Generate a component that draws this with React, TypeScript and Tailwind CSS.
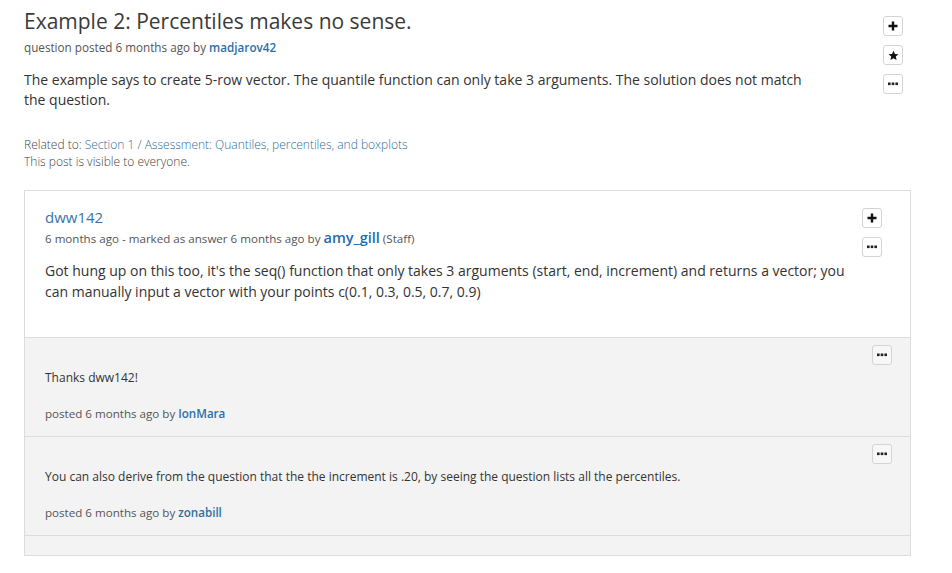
const PlusIcon = () => (
  <svg width="10" height="10" viewBox="0 0 10 10">
    <path d="M5 0.5v9M0.5 5h9" stroke="#111" strokeWidth="2.4" />
  </svg>
);

const StarIcon = () => (
  <svg width="11" height="11" viewBox="0 0 24 24">
    <path d="M12 1.5l3.2 7.1 7.6.7-5.8 5.1 1.7 7.6L12 18l-6.7 4 1.7-7.6L1.2 9.3l7.6-.7z" fill="#111" />
  </svg>
);

const DotsIcon = () => (
  <svg width="10" height="4" viewBox="0 0 10 4">
    <rect x="0" y="0.5" width="2.6" height="2.6" fill="#222" />
    <rect x="3.7" y="0.5" width="2.6" height="2.6" fill="#222" />
    <rect x="7.4" y="0.5" width="2.6" height="2.6" fill="#222" />
  </svg>
);

const IconButton = ({ children, gray }: { children: React.ReactNode; gray?: boolean }) => (
  <button
    className={
      gray
        ? "w-[20px] h-[20px] flex items-center justify-center border border-[#d4d4d4] rounded-[3px] bg-[#f7f7f7]"
        : "w-[20px] h-[20px] flex items-center justify-center border border-[#d4d4d4] rounded-[3px] bg-white"
    }
  >
    {children}
  </button>
);

const Comment = ({ text, author }: { text: string; author: string }) => (
  <div className="border-t border-[#dcdcdc] bg-[#f3f3f3] pl-[20px] pr-[18px] pt-[7px] pb-[14px]">
    <div className="flex justify-end">
      <IconButton gray>
        <DotsIcon />
      </IconButton>
    </div>
    <p className="mt-[4px] text-[12px] leading-[17px] text-[#333]">{text}</p>
    <p className="mt-[19px] text-[11.6px] leading-[17px] text-[#555]">
      posted 6 months ago by <span className="font-semibold text-[#2f6ea6]">{author}</span>
    </p>
  </div>
);

export default function App() {
  return (
    <div
      className="w-[952px] h-[573px] bg-white pl-6 pr-[41px] pt-[7px] overflow-hidden"
      style={{ fontFamily: '"Open Sans", "Noto Sans", sans-serif' }}
    >
      <div className="flex">
        <div className="flex-1">
          <h1 className="text-[21px] leading-[28px] text-[#3a3a3a] font-normal">
            Example 2: Percentiles makes no sense.
          </h1>
          <p className="mt-1 text-[11.7px] leading-[16px] text-[#555]">
            question posted 6 months ago by <span className="font-semibold text-[#2f6ea6]">madjarov42</span>
          </p>
          <p className="mt-[15px] w-[800px] text-[14px] leading-[20px] text-[#333]">
            The example says to create 5-row vector. The quantile function can only take 3 arguments. The solution does not match
            the question.
          </p>
          <div className="mt-[26px] text-[12px] leading-[17px] text-[#444] font-light">
            <p>
              Related to: <span className="text-[#2a6f9e]">Section 1 / Assessment: Quantiles, percentiles, and boxplots</span>
            </p>
            <p>This post is visible to everyone.</p>
          </div>
        </div>
        <div className="mt-[9px] mr-2 flex flex-col gap-[9px]">
          <IconButton>
            <PlusIcon />
          </IconButton>
          <IconButton>
            <StarIcon />
          </IconButton>
          <IconButton>
            <DotsIcon />
          </IconButton>
        </div>
      </div>

      <div className="mt-[20px] border border-[#dcdcdc]">
        <div className="flex pl-[20px] pr-[28px] pt-[16px] pb-[35px] bg-white">
          <div className="flex-1 pr-2">
            <p className="text-[15px] leading-[20px] text-[#3674ad]">dww142</p>
            <p className="mt-[2px] text-[11.6px] leading-[20px] text-[#555]">
              6 months ago - marked as answer 6 months ago by{" "}
              <span className="text-[14.5px] leading-none font-semibold text-[#1f6cb0]">amy_gill</span> (Staff)
            </p>
            <p className="mt-[11px] text-[14px] leading-[21px] text-[#333]">
              Got hung up on this too, it's the seq() function that only takes 3 arguments (start, end, increment) and returns a vector; you
              can manually input a vector with your points c(0.1, 0.3, 0.5, 0.7, 0.9)
            </p>
          </div>
          <div className="mt-px flex flex-col gap-[9px]">
            <IconButton>
              <PlusIcon />
            </IconButton>
            <IconButton>
              <DotsIcon />
            </IconButton>
          </div>
        </div>
        <Comment text="Thanks dww142!" author="IonMara" />
        <Comment
          text="You can also derive from the question that the the increment is .20, by seeing the question lists all the percentiles."
          author="zonabill"
        />
        <div className="h-[20px] border-t border-[#dcdcdc] bg-[#f3f3f3]" />
      </div>
    </div>
  );
}
